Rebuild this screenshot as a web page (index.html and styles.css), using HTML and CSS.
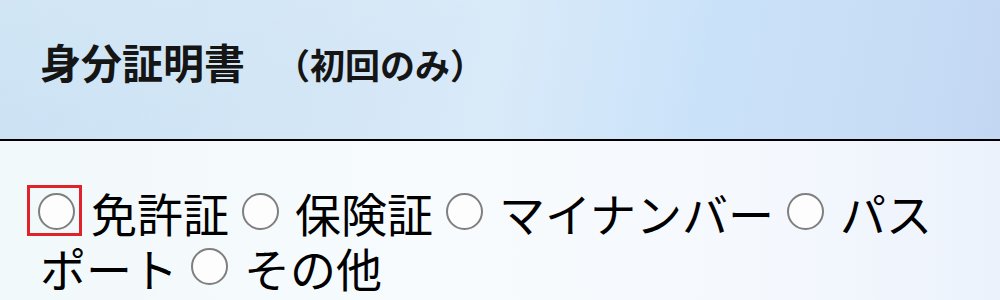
FILE: index.html
```html
<!DOCTYPE html>
<html lang="ja">
<head>
<meta charset="utf-8">
<title>身分証明書</title>
<link rel="stylesheet" href="styles.css">
</head>
<body>
<div class="panel">
  <header class="head">
    <h2 class="title">身分証明書<span class="note">（初回のみ）</span></h2>
  </header>
  <div class="choices"><span class="focus"><input class="radio radio-first" type="radio" name="id" aria-label="免許証"></span>免許証<input class="radio" type="radio" name="id" aria-label="保険証">保険証<input class="radio" type="radio" name="id" aria-label="マイナンバー">マイナンバー<input class="radio" type="radio" name="id" aria-label="パスポート">パスポート<input class="radio" type="radio" name="id" aria-label="その他">その他</div>
</div>
</body>
</html>
```

FILE: styles.css
```css
html, body {
  margin: 0;
  padding: 0;
}
body {
  width: 1000px;
  height: 300px;
  overflow: hidden;
  font-family: "Noto Sans CJK JP", "Noto Sans", sans-serif;
  color: #111;
  background: #f4f9fc;
}
.panel {
  display: flex;
  flex-direction: column;
  height: 300px;
}
.head {
  box-sizing: border-box;
  height: 141px;
  padding: 37px 40px 0 40px;
  border-bottom: 2px solid #000;
  background:
    linear-gradient(160deg, rgba(255,255,255,0.15) 0%, rgba(255,255,255,0) 40%),
    linear-gradient(100deg, #c9e1f3 0%, #d3e6f6 30%, #d9eaf9 50%, #cae2f9 70%, #c7ddf6 88%, #c3d7f2 100%);
}
.title {
  margin: 0;
  font-size: 41px;
  line-height: 1.2;
  font-weight: 700;
  color: #151515;
  white-space: nowrap;
}
.note {
  font-size: 35px;
  font-weight: 700;
  margin-left: 30px;
}
.choices {
  flex: 1;
  box-sizing: border-box;
  padding: 44px 40px 0 40px;
  font-size: 46px;
  line-height: 55px;
  color: #000;
  background: linear-gradient(90deg, #f2f9fb 0%, #f7fbfd 45%, #f5f9fe 75%, #ecf2fc 100%);
}
.radio {
  -webkit-appearance: none;
  appearance: none;
  box-sizing: border-box;
  display: inline-block;
  width: 37px;
  height: 37px;
  margin: 0 16px 0 13px;
  border: 2.5px solid #7f7f7f;
  border-radius: 50%;
  background: #fdfdfd;
  vertical-align: 2px;
}
.focus {
  display: inline-block;
  box-sizing: border-box;
  line-height: 0;
  width: 55px;
  height: 51px;
  padding: 5px 4px 3px 8px;
  margin: 0 9px 0 -13px;
  border: 3px solid #e0232b;
  vertical-align: -4px;
}
.radio-first {
  display: block;
  margin: 0;
}
```
